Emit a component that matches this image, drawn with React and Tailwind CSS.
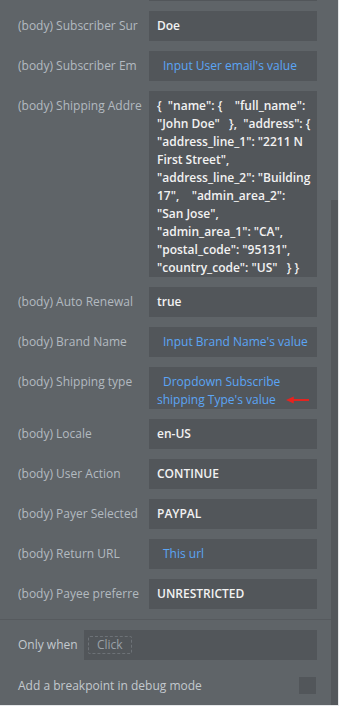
const LABEL = "w-[124px] ml-[18px] mr-[7px] shrink-0 overflow-hidden whitespace-nowrap h-[30px] leading-[30px] text-[#b3bac0]";
const BOX = "w-[168px] shrink-0 bg-[#52565a] px-[8px] pt-[6px] leading-[18px] whitespace-nowrap";

function Row({ label, children, h = "h-[30px]" }) {
  return (
    <div className="flex items-start">
      <div className={LABEL}>{label}</div>
      <div className={`${BOX} ${h} overflow-hidden`}>{children}</div>
    </div>
  );
}

const Val = ({ children }) => (
  <span className="font-semibold text-[#f2f2f2]">{children}</span>
);

const Dyn = ({ children }) => (
  <span className="pl-[6px] text-[#5ba5f5]">{children}</span>
);

const address = [
  '{  "name": {    "full_name":',
  '"John Doe"   },  "address": {',
  '"address_line_1": "2211 N',
  'First Street",',
  '"address_line_2": "Building',
  '17",    "admin_area_2":',
  '"San Jose",',
  '"admin_area_1": "CA",',
  '"postal_code": "95131",',
  '"country_code": "US"   } }',
];

export default function App() {
  return (
    <div
      className="w-[339px] h-[706px] flex bg-[#e6e8ea] text-[12px]"
      style={{ fontFamily: '"Open Sans", sans-serif' }}
    >
      <div className="w-[338px] h-[705px] flex bg-[#5f6468]">
        <div className="w-[331px] flex flex-col">
          <div className="ml-[149px] w-[168px] h-[1px] bg-[#52565a]" />
          <div className="flex flex-col gap-[10px] pt-[10px]">
            <Row label="(body) Subscriber Sur">
              <Val>Doe</Val>
            </Row>
            <Row label="(body) Subscriber Em">
              <Dyn>Input User email's value</Dyn>
            </Row>
            <Row label="(body) Shipping Addre" h="h-[186px]">
              <div className="font-semibold text-[#f2f2f2]">
                {address.map((l, i) => (
                  <div key={i} className="whitespace-pre">
                    {l}
                  </div>
                ))}
              </div>
            </Row>
            <Row label="(body) Auto Renewal">
              <Val>true</Val>
            </Row>
            <Row label="(body) Brand Name">
              <Dyn>Input Brand Name's value</Dyn>
            </Row>
            <Row label="(body) Shipping type" h="h-[42px]">
              <div className="text-[#5ba5f5]">
                <span className="pl-[6px]">Dropdown Subscribe</span>
              </div>
              <div className="flex items-center text-[#5ba5f5]">
                <span>shipping Type's value</span>
                <svg width="24" height="8" viewBox="0 0 24 8" className="ml-[10px]">
                  <path d="M0 4 L8 0.5 L8 7.5 Z" fill="#e8231f" />
                  <rect x="6" y="3" width="18" height="2" fill="#e8231f" />
                </svg>
              </div>
            </Row>
            <Row label="(body) Locale">
              <Val>en-US</Val>
            </Row>
            <Row label="(body) User Action">
              <Val>CONTINUE</Val>
            </Row>
            <Row label="(body) Payer Selected">
              <Val>PAYPAL</Val>
            </Row>
            <Row label="(body) Return URL">
              <Dyn>This url</Dyn>
            </Row>
            <Row label="(body) Payee preferre">
              <Val>UNRESTRICTED</Val>
            </Row>
          </div>
          <div className="mt-[10px] h-[1px] bg-[#565a5e]" />
          <div className="flex items-center mt-[10px] h-[30px]">
            <span className="ml-[18px] w-[66px] text-[#c3c9ce]">Only when</span>
            <div className="w-[233px] h-[30px] bg-[#52565a] flex items-center pl-[4px]">
              <span className="h-[18px] px-[8px] leading-[16px] border border-dashed border-[#6d7277] rounded-[2px] text-[#9aa1a7]">
                Click
              </span>
            </div>
          </div>
          <div className="flex items-center mt-[17px] h-[17px]">
            <span className="ml-[18px] flex-1 text-[#c3c9ce]">
              Add a breakpoint in debug mode
            </span>
            <div className="w-[17px] h-[17px] bg-[#52565a] mr-[15px]" />
          </div>
        </div>
        <div className="w-[7px] flex flex-col">
          <div className="h-[200px]" />
          <div className="flex-1 bg-[#53575b]" />
        </div>
      </div>
    </div>
  );
}
